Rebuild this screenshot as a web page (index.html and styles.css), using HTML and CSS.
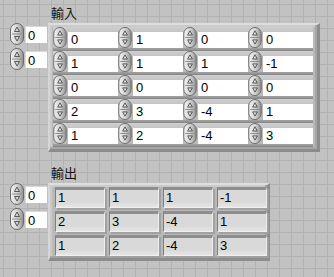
FILE: index.html
```html
<!DOCTYPE html>
<html>
<head>
<meta charset="utf-8">
<link rel="stylesheet" href="styles.css">
</head>
<body>
<svg class="defs" width="0" height="0">
  <defs>
    <linearGradient id="pill" x1="0" y1="0" x2="1" y2="0">
      <stop offset="0" stop-color="#f4f4f4"/>
      <stop offset="0.55" stop-color="#d2d2d2"/>
      <stop offset="1" stop-color="#8e8e8e"/>
    </linearGradient>
    <symbol id="spin" viewBox="0 0 14 22">
      <rect x="0.5" y="0.5" width="13" height="21" rx="6.5" fill="url(#pill)" stroke="#6a6a6a"/>
      <line x1="2" y1="11" x2="12" y2="11" stroke="#8a8a8a"/>
      <path d="M7 4 L9.5 8.5 L4.5 8.5 Z" fill="none" stroke="#4a4a4a" stroke-width="0.9"/>
      <path d="M7 18 L9.5 13.5 L4.5 13.5 Z" fill="none" stroke="#4a4a4a" stroke-width="0.9"/>
    </symbol>
  </defs>
</svg>

<div class="panel">
  <section class="group">
    <div class="label">輸入</div>
    <div class="index">
      <div class="num"><svg class="ispin"><use href="#spin"/></svg><span class="ibox">0</span></div>
      <div class="num"><svg class="ispin"><use href="#spin"/></svg><span class="ibox">0</span></div>
    </div>
    <div class="frame ctl-frame">
      <div class="ctl-grid">
        <div class="el"><svg class="spin"><use href="#spin"/></svg><span class="cell">0</span></div>
        <div class="el"><svg class="spin"><use href="#spin"/></svg><span class="cell">1</span></div>
        <div class="el"><svg class="spin"><use href="#spin"/></svg><span class="cell">0</span></div>
        <div class="el"><svg class="spin"><use href="#spin"/></svg><span class="cell">0</span></div>

        <div class="el"><svg class="spin"><use href="#spin"/></svg><span class="cell">1</span></div>
        <div class="el"><svg class="spin"><use href="#spin"/></svg><span class="cell">1</span></div>
        <div class="el"><svg class="spin"><use href="#spin"/></svg><span class="cell">1</span></div>
        <div class="el"><svg class="spin"><use href="#spin"/></svg><span class="cell">-1</span></div>

        <div class="el"><svg class="spin"><use href="#spin"/></svg><span class="cell">0</span></div>
        <div class="el"><svg class="spin"><use href="#spin"/></svg><span class="cell">0</span></div>
        <div class="el"><svg class="spin"><use href="#spin"/></svg><span class="cell">0</span></div>
        <div class="el"><svg class="spin"><use href="#spin"/></svg><span class="cell">0</span></div>

        <div class="el"><svg class="spin"><use href="#spin"/></svg><span class="cell">2</span></div>
        <div class="el"><svg class="spin"><use href="#spin"/></svg><span class="cell">3</span></div>
        <div class="el"><svg class="spin"><use href="#spin"/></svg><span class="cell">-4</span></div>
        <div class="el"><svg class="spin"><use href="#spin"/></svg><span class="cell">1</span></div>

        <div class="el"><svg class="spin"><use href="#spin"/></svg><span class="cell">1</span></div>
        <div class="el"><svg class="spin"><use href="#spin"/></svg><span class="cell">2</span></div>
        <div class="el"><svg class="spin"><use href="#spin"/></svg><span class="cell">-4</span></div>
        <div class="el"><svg class="spin"><use href="#spin"/></svg><span class="cell">3</span></div>
      </div>
    </div>
  </section>

  <section class="group out">
    <div class="label">輸出</div>
    <div class="index">
      <div class="num"><svg class="ispin"><use href="#spin"/></svg><span class="ibox">0</span></div>
      <div class="num"><svg class="ispin"><use href="#spin"/></svg><span class="ibox">0</span></div>
    </div>
    <div class="frame ind-frame">
      <div class="ind-grid">
        <span class="ind">1</span><span class="ind">1</span><span class="ind">1</span><span class="ind">-1</span>
        <span class="ind">2</span><span class="ind">3</span><span class="ind">-4</span><span class="ind">1</span>
        <span class="ind">1</span><span class="ind">2</span><span class="ind">-4</span><span class="ind">3</span>
      </div>
    </div>
  </section>
</div>
</body>
</html>
```

FILE: styles.css
```css
body {
  margin: 0;
  width: 334px;
  height: 277px;
  overflow: hidden;
  background-color: #c2c2c2;
  background-image:
    linear-gradient(#b2b2b2 1px, transparent 1px),
    linear-gradient(90deg, #b2b2b2 1px, transparent 1px);
  background-size: 12px 12px;
  background-position: 3px 4px;
  font-family: "Liberation Sans", Arial, sans-serif;
  font-size: 13px;
  color: #000;
}

.defs {
  position: absolute;
}

.panel {
  padding: 5px 0 0 10px;
}

.group {
  display: grid;
  grid-template-columns: 38px auto;
  justify-content: start;
}

.group.out {
  margin-top: 13px;
}

.label {
  grid-column: 2;
  grid-row: 1;
  padding-left: 3px;
  height: 16px;
  line-height: 16px;
  margin-bottom: 2px;
  font-family: "Noto Sans CJK TC", "Noto Sans CJK SC", sans-serif;
  font-size: 13px;
  color: #111;
}

.index {
  grid-column: 1;
  grid-row: 2;
  display: flex;
  flex-direction: column;
  gap: 1px;
  margin-top: -1px;
}

.num {
  display: flex;
  align-items: center;
  height: 24px;
}

.ispin {
  width: 14px;
  height: 24px;
}

.ibox {
  width: 22px;
  height: 17px;
  margin-left: 1px;
  box-sizing: border-box;
  padding-left: 2px;
  line-height: 17px;
  background: #fff;
  border-top: 1px solid #d8d8d8;
  border-left: 1px solid #d8d8d8;
}

.frame {
  grid-column: 2;
  grid-row: 2;
  box-sizing: border-box;
  background: #b9b9b9;
  border-top: 2px solid #dedede;
  border-left: 2px solid #d6d6d6;
  border-right: 3px solid #8c8c8c;
  border-bottom: 3px solid #8c8c8c;
  box-shadow: inset -2px -2px 0 #a6a6a6, inset 2px 2px 0 #cacaca;
}

.ctl-frame {
  width: 272px;
  padding: 2px 0 0 3px;
  height: 129px;
}

.ctl-grid {
  display: grid;
  grid-template-columns: repeat(4, 65px);
  grid-auto-rows: 24px;
}

.el {
  display: flex;
  align-items: flex-start;
  background: linear-gradient(to bottom,
    #cfcfcf 0, #c4c4c4 5px,
    transparent 5px, transparent 21px,
    #a4a4a4 21px, #858585 24px);
}

.spin {
  width: 14px;
  height: 21px;
  flex: none;
}

.cell {
  width: 50px;
  height: 16px;
  margin-top: 5px;
  margin-left: 1px;
  box-sizing: border-box;
  padding-left: 3px;
  line-height: 16px;
  background: #fff;
}

.ind-frame {
  width: 222px;
  height: 78px;
  padding: 2px 0 0 5px;
}

.ind-grid {
  display: grid;
  grid-template-columns: repeat(4, 50px);
  grid-auto-rows: 21px;
  column-gap: 4px;
  row-gap: 3px;
}

.ind {
  box-sizing: border-box;
  padding-left: 2px;
  line-height: 16px;
  background: linear-gradient(to bottom, #d9d9d9 0, #d9d9d9 70%, #e6e6e6 100%);
  border-top: 3px solid #8e8e8e;
  border-left: 1px solid #7e7e7e;
  border-right: 1px solid #efefef;
  border-bottom: 1px solid #f0f0f0;
  box-shadow: 2px 2px 0 #a0a0a0;
}
```
